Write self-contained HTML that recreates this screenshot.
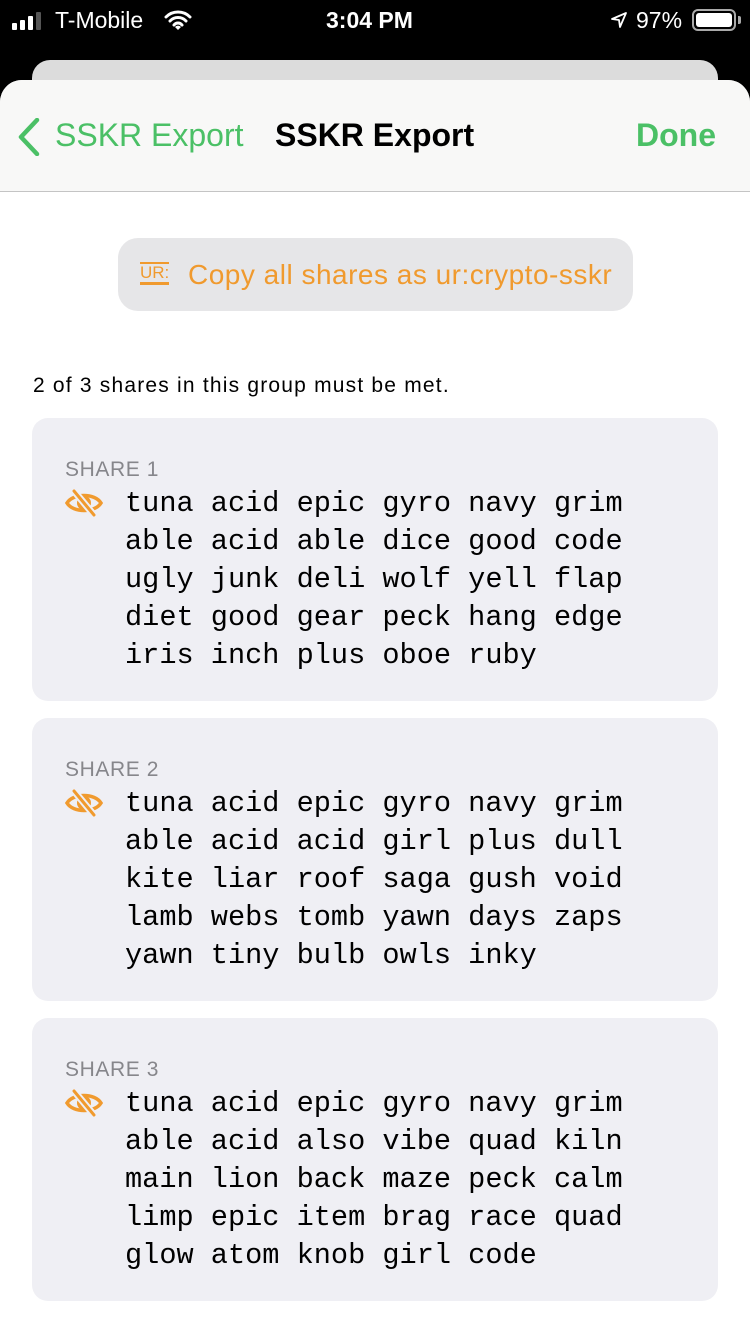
<!DOCTYPE html>
<html><head><meta charset="utf-8"><style>
*{margin:0;padding:0;box-sizing:border-box}
body{width:750px;height:1334px;background:#000;position:relative;overflow:hidden;font-family:"Liberation Sans",sans-serif}
.sb{position:absolute;top:0;left:0;width:750px;height:40px;color:#fff;font-size:23px}
.sheet{position:absolute;top:80px;left:0;width:750px;height:1254px;background:#fff;border-radius:22px 22px 0 0;overflow:hidden}
.nav{height:112px;background:#f8f8f7;border-bottom:1px solid #c4c4c4;position:relative}
.green{color:#4bc066}
.btn{position:absolute;left:118px;top:158px;width:515px;height:73px;background:#e6e6e8;border-radius:20px;color:#f09a2e;font-size:28px;letter-spacing:0.5px}
.card{position:absolute;left:32px;width:686px;height:283px;background:#efeff4;border-radius:16px}
.lbl{position:absolute;left:33px;top:40px;font-size:21px;color:#86868b;letter-spacing:0.6px}
.words{position:absolute;left:93px;top:67px;font-family:"Liberation Mono",monospace;font-size:28.6px;line-height:38px;white-space:pre;color:#000}
.eye{position:absolute;left:33px;top:70px}
</style></head><body>
<div class="sb">
 <div style="position:absolute;left:12px;top:12px;display:flex;align-items:flex-end;gap:3px">
  <div style="width:5px;height:7px;background:#fff;border-radius:1px"></div>
  <div style="width:5px;height:10px;background:#fff;border-radius:1px"></div>
  <div style="width:5px;height:14px;background:#fff;border-radius:1px"></div>
  <div style="width:5px;height:18px;background:#555;border-radius:1px"></div>
 </div>
 <div style="position:absolute;left:55px;top:7px">T-Mobile</div>
 <svg style="position:absolute;left:164px;top:9px" width="28" height="22" viewBox="0 0 28 22"><path d="M2 8a17 17 0 0 1 24 0M6 12a11 11 0 0 1 16 0M10 16a5 5 0 0 1 8 0" stroke="#fff" stroke-width="3" fill="none" stroke-linecap="round"/><path d="M14 21l-3-3a4 4 0 0 1 6 0z" fill="#fff"/></svg>
 <div style="position:absolute;left:326px;top:7px;font-weight:bold">3:04 PM</div>
 <svg style="position:absolute;left:610px;top:11px" width="18" height="18" viewBox="0 0 18 18"><path d="M16 2L2 8l7 1 1 7z" stroke="#fff" stroke-width="1.8" fill="none" stroke-linejoin="round"/></svg>
 <div style="position:absolute;left:636px;top:7px">97%</div>
 <div style="position:absolute;left:692px;top:9px;width:44px;height:22px;border:2px solid #aaa;border-radius:6px;padding:2px"><div style="background:#fff;height:100%;border-radius:3px"></div></div>
 <div style="position:absolute;left:738px;top:16px;width:3px;height:8px;background:#aaa;border-radius:0 2px 2px 0"></div>
</div>
<div style="position:absolute;left:32px;top:60px;width:686px;height:60px;background:#dcdcdc;border-radius:18px"></div>
<div class="sheet">
 <div class="nav">
  <svg style="position:absolute;left:17px;top:38px" width="24" height="38" viewBox="0 0 24 38"><path d="M20 2L4 19l16 17" stroke="#4bc066" stroke-width="4.5" fill="none" stroke-linecap="round" stroke-linejoin="round"/></svg>
  <div class="green" style="position:absolute;left:55px;top:37px;font-size:32px">SSKR Export</div>
  <div style="position:absolute;left:275px;top:37px;font-size:32px;font-weight:bold">SSKR Export</div>
  <div class="green" style="position:absolute;left:636px;top:37px;font-size:32px;font-weight:bold">Done</div>
 </div>
 <div class="btn">
  <div style="position:absolute;left:22px;top:24px;font-size:17px;line-height:18px;border-top:2px solid #f09a2e;border-bottom:3px solid #f09a2e;letter-spacing:0">UR:</div>
  <div style="position:absolute;left:70px;top:21px">Copy all shares as ur:crypto-sskr</div>
 </div>
 <div style="position:absolute;left:33px;top:294px;font-size:21px;letter-spacing:1.2px;color:#000">2 of 3 shares in this group must be met.</div>
</div>
<div class="card" style="top:418px"><div class="lbl">SHARE 1</div>
<svg class="eye" width="38" height="30" viewBox="0 0 38 30"><path d="M2 15C8 5 30 5 36 15C30 25 8 25 2 15z" stroke="#f09a2e" stroke-width="3.5" fill="none"/><circle cx="19" cy="15" r="7" fill="#f09a2e"/><path d="M9 3l20 24" stroke="#efeff4" stroke-width="7"/><path d="M9 3l20 24" stroke="#f09a2e" stroke-width="3" stroke-linecap="round"/></svg>
<div class="words">tuna acid epic gyro navy grim
able acid able dice good code
ugly junk deli wolf yell flap
diet good gear peck hang edge
iris inch plus oboe ruby</div></div>
<div class="card" style="top:718px"><div class="lbl">SHARE 2</div>
<svg class="eye" width="38" height="30" viewBox="0 0 38 30"><path d="M2 15C8 5 30 5 36 15C30 25 8 25 2 15z" stroke="#f09a2e" stroke-width="3.5" fill="none"/><circle cx="19" cy="15" r="7" fill="#f09a2e"/><path d="M9 3l20 24" stroke="#efeff4" stroke-width="7"/><path d="M9 3l20 24" stroke="#f09a2e" stroke-width="3" stroke-linecap="round"/></svg>
<div class="words">tuna acid epic gyro navy grim
able acid acid girl plus dull
kite liar roof saga gush void
lamb webs tomb yawn days zaps
yawn tiny bulb owls inky</div></div>
<div class="card" style="top:1018px"><div class="lbl">SHARE 3</div>
<svg class="eye" width="38" height="30" viewBox="0 0 38 30"><path d="M2 15C8 5 30 5 36 15C30 25 8 25 2 15z" stroke="#f09a2e" stroke-width="3.5" fill="none"/><circle cx="19" cy="15" r="7" fill="#f09a2e"/><path d="M9 3l20 24" stroke="#efeff4" stroke-width="7"/><path d="M9 3l20 24" stroke="#f09a2e" stroke-width="3" stroke-linecap="round"/></svg>
<div class="words">tuna acid epic gyro navy grim
able acid also vibe quad kiln
main lion back maze peck calm
limp epic item brag race quad
glow atom knob girl code</div></div>
</body></html>
